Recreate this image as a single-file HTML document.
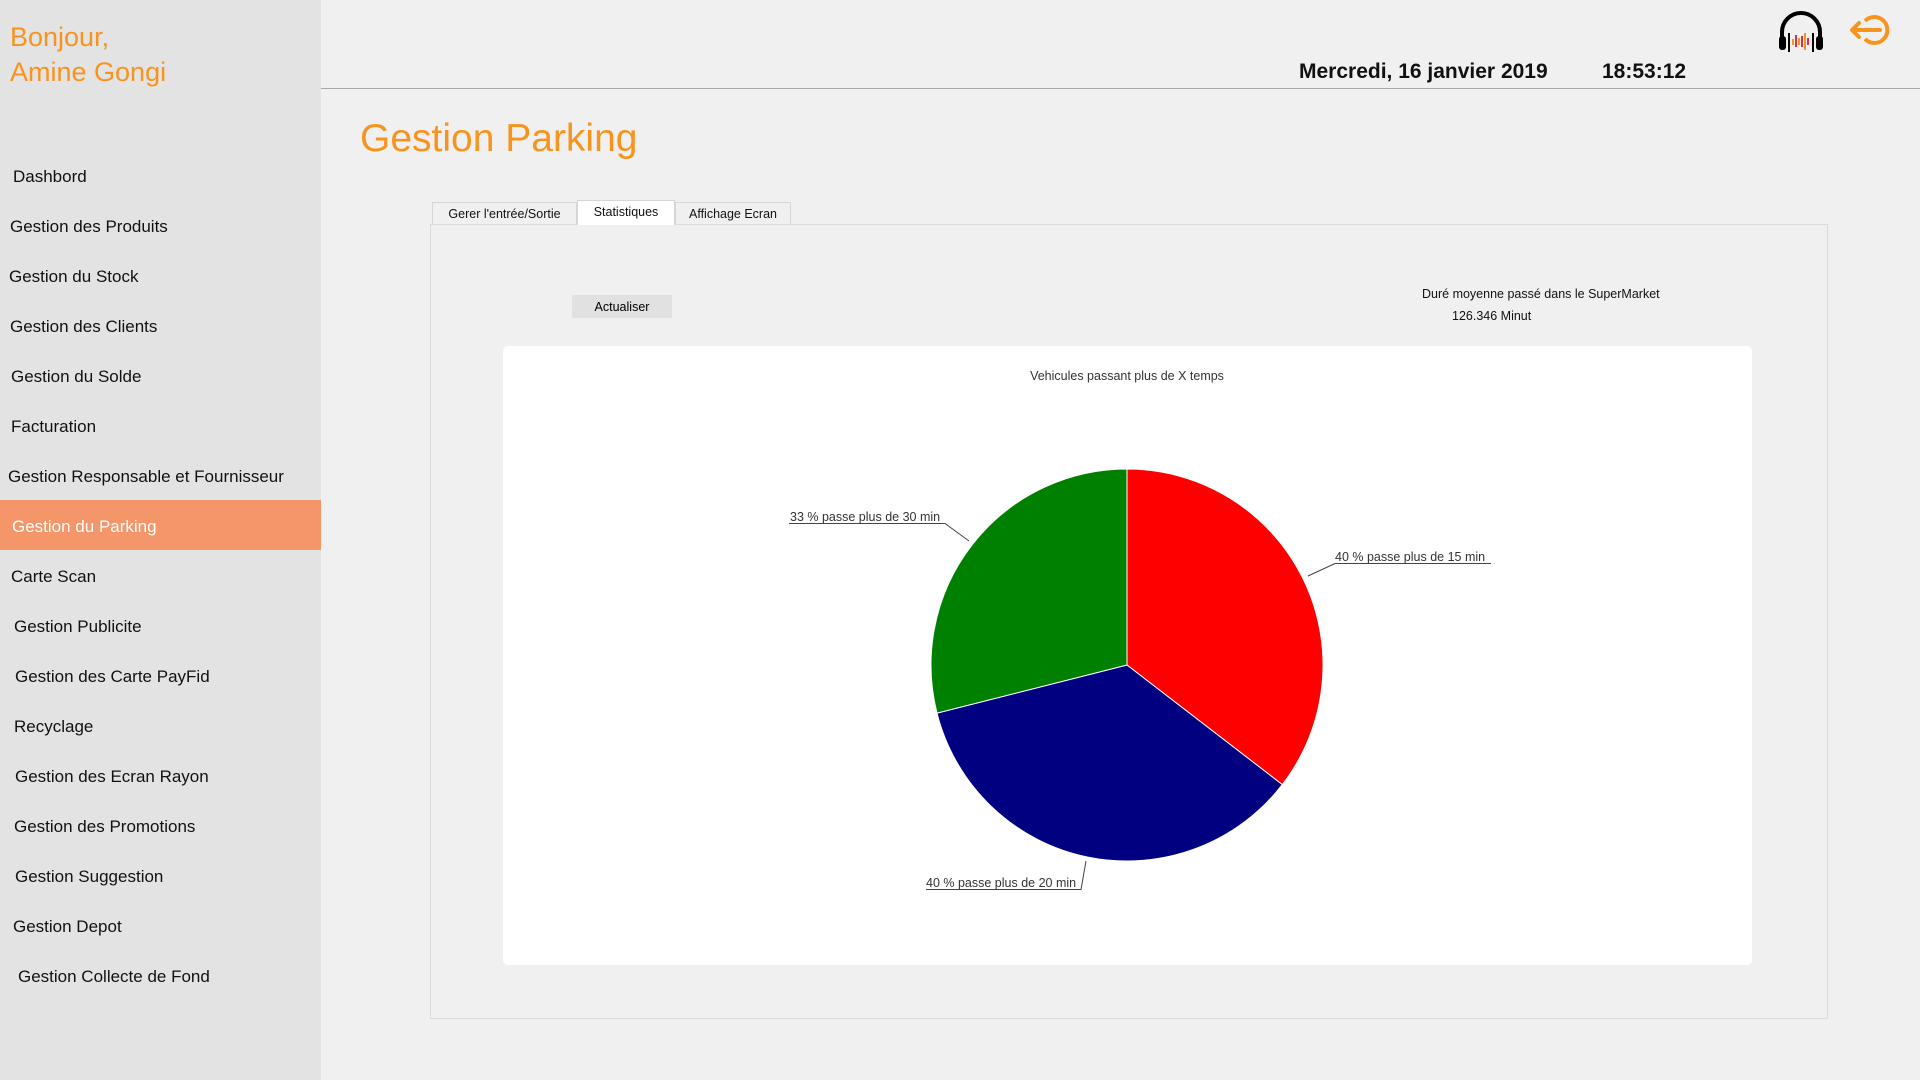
<!DOCTYPE html>
<html><head><meta charset="utf-8"><style>
*{margin:0;padding:0;box-sizing:border-box}
body{width:1920px;height:1080px;background:#f0f0f0;font-family:"Liberation Sans",sans-serif;position:relative;overflow:hidden}
.side{position:absolute;left:0;top:0;width:321px;height:1080px;background:#e3e3e3}
.hello{position:absolute;left:10px;top:20px;color:#f7941d;font-size:27px;line-height:35px}
.menu div{position:absolute;left:0;width:321px;height:50px;line-height:54px;font-size:17px;color:#111}
.menu div.act{background:#f4966a;color:#fff}
.hline{position:absolute;left:321px;top:88px;width:1599px;height:1px;background:#a8a8a8}
.date{position:absolute;top:60px;font-size:21px;font-weight:bold;color:#111}
.title{position:absolute;left:360px;top:117px;font-size:39px;color:#f7941d}
.tab{position:absolute;top:202px;height:22px;border:1px solid #d6d6d6;border-bottom:none;background:#f0f0f0;font-size:12.5px;line-height:22px;text-align:center;color:#111}
.panel{position:absolute;left:430px;top:224px;width:1398px;height:795px;border:1px solid #dadada;background:#f0f0f0}
.btn{position:absolute;left:572px;top:295px;width:100px;height:23px;background:#e1e1e1;font-size:12.5px;line-height:25px;text-align:center}
.small{position:absolute;font-size:12.5px;color:#111}
.chart{position:absolute;left:503px;top:346px;width:1249px;height:619px;background:#fff;border-radius:5px}
</style></head><body>
<div class="side">
<div class="hello">Bonjour,<br>Amine Gongi</div>
<div class="menu">
<div style="top:150px;padding-left:13px">Dashbord</div>
<div style="top:200px;padding-left:10px">Gestion des Produits</div>
<div style="top:250px;padding-left:9px">Gestion du Stock</div>
<div style="top:300px;padding-left:10px">Gestion des Clients</div>
<div style="top:350px;padding-left:11px">Gestion du Solde</div>
<div style="top:400px;padding-left:11px">Facturation</div>
<div style="top:450px;padding-left:8px">Gestion Responsable et Fournisseur</div>
<div class="act" style="top:500px;padding-left:12px">Gestion du Parking</div>
<div style="top:550px;padding-left:11px">Carte Scan</div>
<div style="top:600px;padding-left:14px">Gestion Publicite</div>
<div style="top:650px;padding-left:15px">Gestion des Carte PayFid</div>
<div style="top:700px;padding-left:14px">Recyclage</div>
<div style="top:750px;padding-left:15px">Gestion des Ecran Rayon</div>
<div style="top:800px;padding-left:14px">Gestion des Promotions</div>
<div style="top:850px;padding-left:15px">Gestion Suggestion</div>
<div style="top:900px;padding-left:13px">Gestion Depot</div>
<div style="top:950px;padding-left:18px">Gestion Collecte de Fond</div>
</div></div>
<div class="hline"></div>
<div class="date" style="left:1299px">Mercredi, 16 janvier 2019</div>
<div class="date" style="left:1602px">18:53:12</div>
<svg style="position:absolute;left:1776px;top:8px" width="50" height="46" viewBox="0 0 50 46">
<path d="M6 38 V24 A19 19 0 0 1 44 24 V38" fill="none" stroke="#000" stroke-width="4"/>
<rect x="3" y="28" width="7" height="14" rx="3" fill="#000"/><rect x="40" y="28" width="7" height="14" rx="3" fill="#000"/>
<rect x="12" y="25" width="2" height="19" fill="#000"/><rect x="36" y="25" width="2" height="19" fill="#000"/>
<rect x="16" y="31" width="2" height="6" fill="#f7941d"/><rect x="19" y="27" width="2" height="12" fill="#d9304f"/>
<rect x="22" y="30" width="2" height="7" fill="#f7941d"/><rect x="25" y="28" width="2" height="11" fill="#d9304f"/>
<rect x="28" y="25" width="2" height="17" fill="#f7941d"/><rect x="31" y="30" width="2" height="7" fill="#d9304f"/>
</svg>
<svg style="position:absolute;left:1846px;top:10px" width="50" height="40" viewBox="0 0 50 40">
<path d="M19 11 A13 13 0 1 1 19 29" fill="none" stroke="#f7941d" stroke-width="4"/>
<path d="M34 20 H7 M13 13 L6 20 L13 27" fill="none" stroke="#f7941d" stroke-width="4" stroke-linecap="round" stroke-linejoin="round"/>
</svg>
<div class="title">Gestion Parking</div>
<div class="panel"></div>
<div class="tab" style="left:432px;width:145px">Gerer l'entrée/Sortie</div>
<div class="tab" style="left:577px;top:200px;height:25px;width:98px;background:#fff">Statistiques</div>
<div class="tab" style="left:675px;width:116px">Affichage Ecran</div>
<div class="btn">Actualiser</div>
<div class="small" style="left:1422px;top:287px">Duré moyenne passé dans le SuperMarket</div>
<div class="small" style="left:1452px;top:309px">126.346 Minut</div>
<div class="chart"></div>
<div class="small" style="left:0;width:2254px;text-align:center;top:369px;color:#333">Vehicules passant plus de X temps</div>
<svg style="position:absolute;left:0;top:0" width="1920" height="1080">
<path d="M1127 665 L1127 469 A196 196 0 0 1 1282.3 784.6 Z" fill="#ff0000" stroke="#fff" stroke-width="1"/>
<path d="M1127 665 L1282.3 784.6 A196 196 0 0 1 937 713.1 Z" fill="#000080" stroke="#fff" stroke-width="1"/>
<path d="M1127 665 L937 713.1 A196 196 0 0 1 1127 469 Z" fill="#008000" stroke="#fff" stroke-width="1"/>
<g stroke="#444" stroke-width="1" fill="none">
<path d="M789 523.5 H945 L969 541"/>
<path d="M1335 563.5 H1491 M1335 563.5 L1308 576"/>
<path d="M926 889.5 H1081 L1086 861"/>
</g>
<g font-family="Liberation Sans,sans-serif" font-size="12.5" fill="#333">
<text x="790" y="521">33 % passe plus de 30 min</text>
<text x="1335" y="561">40 % passe plus de 15 min</text>
<text x="926" y="887">40 % passe plus de 20 min</text>
</g>
</svg>
</body></html>
